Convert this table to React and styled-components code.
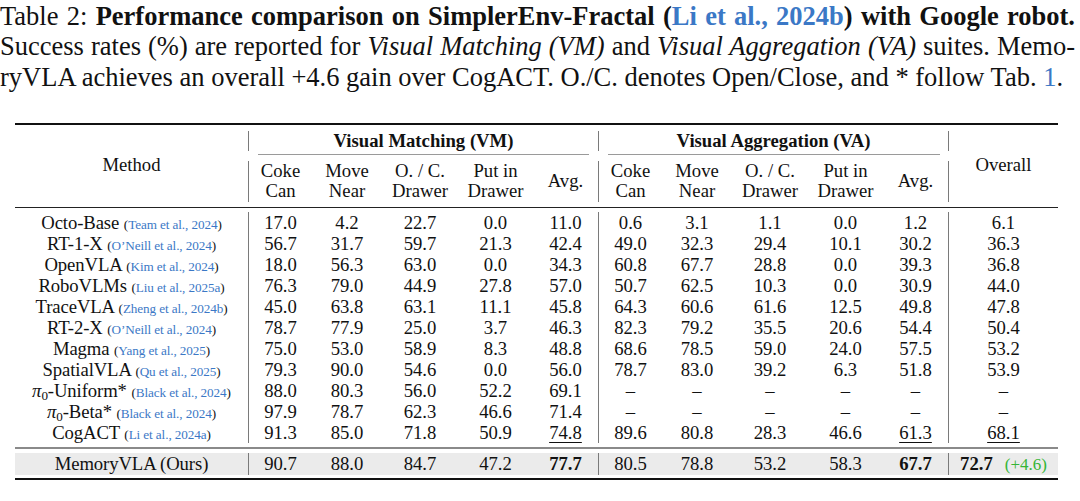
import React from 'react';
import styled, { createGlobalStyle } from 'styled-components';

const BLUE = '#3b78c6';
const GREEN = '#35b535';
const SEP = '#7a7a7a';
const SERIF = `"Liberation Serif", "DejaVu Serif", serif`;

const GlobalStyle = createGlobalStyle`
    body {
        margin: 0;
        background: #ffffff;
        color: #111111;
        font-family: ${SERIF};
    }
`;

const rows = [
    ['Octo-Base', 'Team et al., 2024', '17.0', '4.2', '22.7', '0.0', '11.0', '0.6', '3.1', '1.1', '0.0', '1.2', '6.1'],
    ['RT-1-X', 'O’Neill et al., 2024', '56.7', '31.7', '59.7', '21.3', '42.4', '49.0', '32.3', '29.4', '10.1', '30.2', '36.3'],
    ['OpenVLA', 'Kim et al., 2024', '18.0', '56.3', '63.0', '0.0', '34.3', '60.8', '67.7', '28.8', '0.0', '39.3', '36.8'],
    ['RoboVLMs', 'Liu et al., 2025a', '76.3', '79.0', '44.9', '27.8', '57.0', '50.7', '62.5', '10.3', '0.0', '30.9', '44.0'],
    ['TraceVLA', 'Zheng et al., 2024b', '45.0', '63.8', '63.1', '11.1', '45.8', '64.3', '60.6', '61.6', '12.5', '49.8', '47.8'],
    ['RT-2-X', 'O’Neill et al., 2024', '78.7', '77.9', '25.0', '3.7', '46.3', '82.3', '79.2', '35.5', '20.6', '54.4', '50.4'],
    ['Magma', 'Yang et al., 2025', '75.0', '53.0', '58.9', '8.3', '48.8', '68.6', '78.5', '59.0', '24.0', '57.5', '53.2'],
    ['SpatialVLA', 'Qu et al., 2025', '79.3', '90.0', '54.6', '0.0', '56.0', '78.7', '83.0', '39.2', '6.3', '51.8', '53.9'],
    ['pi:-Uniform*', 'Black et al., 2024', '88.0', '80.3', '56.0', '52.2', '69.1', '–', '–', '–', '–', '–', '–'],
    ['pi:-Beta*', 'Black et al., 2024', '97.9', '78.7', '62.3', '46.6', '71.4', '–', '–', '–', '–', '–', '–'],
    ['CogACT', 'Li et al., 2024a', '91.3', '85.0', '71.8', '50.9', '_74.8', '89.6', '80.8', '28.3', '46.6', '_61.3', '_68.1'],
];

const ours = ['90.7', '88.0', '84.7', '47.2', '*77.7', '80.5', '78.8', '53.2', '58.3', '*67.7'];

const colWidths = [233, 64, 70, 76, 75, 65, 64, 70, 76, 75, 66, 109];

const subHeads = [
    ['Coke', 'Can'],
    ['Move', 'Near'],
    ['O. / C.', 'Drawer'],
    ['Put in', 'Drawer'],
    ['Avg.'],
];

function Value({ v }) {
    if (v.startsWith('_')) return <Under>{v.slice(1)}</Under>;
    if (v.startsWith('*')) return <b>{v.slice(1)}</b>;
    return v;
}

function MethodName({ name }) {
    if (name.startsWith('pi:')) {
        return (
            <>
                <i>π</i>
                <Sub>0</Sub>
                {name.slice(3)}
            </>
        );
    }
    return name;
}

function Cite({ text }) {
    return (
        <CiteText>
            (<CiteLink>{text}</CiteLink>)
        </CiteText>
    );
}

function RuleRow({ $top, $weight, $color, $after }) {
    return (
        <tr>
            <RuleCell colSpan={12}>
                <Line $top={$top} $weight={$weight} $color={$color} $after={$after} />
            </RuleCell>
        </tr>
    );
}

function sepFor(i) {
    // i: 0..9 index across the ten score columns
    return { $left: i === 0 || i === 5, $right: i === 9 };
}

function App() {
    return (
        <>
            <GlobalStyle />
            <Page>
                <Caption>
                    <CaptionLine $full $squeeze>
                        Table 2: <b>Performance comparison on SimplerEnv-Fractal (<CapLink>Li et al., 2024b</CapLink>) with Google robot.</b>
                    </CaptionLine>
                    <CaptionLine $full $squeeze>
                        Success rates (%) are reported for <i>Visual Matching (VM)</i> and <i>Visual Aggregation (VA)</i> suites. Memo-
                    </CaptionLine>
                    <CaptionLine>
                        ryVLA achieves an overall +4.6 gain over CogACT. O./C. denotes Open/Close, and * follow Tab. <CapLink>1</CapLink>.
                    </CaptionLine>
                </Caption>

                <Table>
                    <colgroup>
                        {colWidths.map((w, i) => (
                            <Col key={i} $w={w} />
                        ))}
                    </colgroup>
                    <tbody>
                        <RuleRow $top={0} $weight={2} $color="#111" $after={6} />
                        <tr>
                            <HeadCell rowSpan={3}>Method</HeadCell>
                            <GroupCell colSpan={5} $left>Visual Matching (VM)</GroupCell>
                            <GroupCell colSpan={5} $left $right>Visual Aggregation (VA)</GroupCell>
                            <HeadCell rowSpan={3}>Overall</HeadCell>
                        </tr>
                        <tr>
                            <RuleCell colSpan={5}>
                                <CMid />
                            </RuleCell>
                            <RuleCell colSpan={5}>
                                <CMid />
                            </RuleCell>
                        </tr>
                        <tr>
                            {[...subHeads, ...subHeads].map((lines, i) => (
                                <SubHead key={i} {...sepFor(i)}>
                                    {lines.map((l, j) => (
                                        <div key={j}>{l}</div>
                                    ))}
                                </SubHead>
                            ))}
                        </tr>
                        <RuleRow $top={5} $weight={1} $color="#222" $after={4} />
                        {rows.map((r) => (
                            <DataRow key={r[0]}>
                                <MethodCell>
                                    <MethodName name={r[0]} /> <Cite text={r[1]} />
                                </MethodCell>
                                {r.slice(2, 12).map((v, i) => (
                                    <Cell key={i} {...sepFor(i)}>
                                        <Value v={v} />
                                    </Cell>
                                ))}
                                <Cell>
                                    <Value v={r[12]} />
                                </Cell>
                            </DataRow>
                        ))}
                        <RuleRow $top={4} $weight={2} $color="#8a8a8a" $after={4} />
                        <OursRow>
                            <MethodCell>MemoryVLA (Ours)</MethodCell>
                            {ours.map((v, i) => (
                                <Cell key={i} {...sepFor(i)}>
                                    <Value v={v} />
                                </Cell>
                            ))}
                            <Cell>
                                <b>72.7</b>
                                <Gain>(+4.6)</Gain>
                            </Cell>
                        </OursRow>
                        <RuleRow $top={3} $weight={2} $color="#111" $after={0} />
                    </tbody>
                </Table>
            </Page>
        </>
    );
}

const Page = styled.div`
    padding-top: 1px;
    font-family: ${SERIF};
`;

const Caption = styled.div`
    width: 1075px;
    font-family: ${SERIF};
    font-size: 26.5px;
    line-height: 30.4px;
`;

const CaptionLine = styled.div`
    text-align: justify;
    text-align-last: ${(p) => (p.$full ? 'justify' : 'left')};
    word-spacing: ${(p) => (p.$squeeze ? '-2px' : '0')};
    white-space: nowrap;
`;

const CapLink = styled.span`
    color: ${BLUE};
`;

const Table = styled.table`
    margin: 31px 0 0 15px;
    width: 1043px;
    table-layout: fixed;
    border-collapse: separate;
    border-spacing: 0;
    font-family: ${SERIF};
    font-size: 18.7px;
    line-height: 20px;
    color: #111111;
`;

const Col = styled.col`
    width: ${(p) => p.$w}px;
`;

const RuleCell = styled.td`
    padding: 0;
    vertical-align: top;
    line-height: 0;
`;

const Line = styled.div`
    margin-top: ${(p) => p.$top}px;
    border-top: ${(p) => p.$weight}px solid ${(p) => p.$color};
    height: ${(p) => p.$after}px;
`;

const CMid = styled.div`
    margin: 3px 9px 0 10px;
    border-top: 1px solid #9a9a9a;
    height: 6px;
`;

const Cell = styled.td`
    padding: 0;
    height: 21px;
    text-align: center;
    vertical-align: middle;
    white-space: nowrap;
    border-left: ${(p) => (p.$left ? `1px solid ${SEP}` : 'none')};
    border-right: ${(p) => (p.$right ? `1px solid ${SEP}` : 'none')};
`;

const HeadCell = styled(Cell)`
    padding-bottom: 3px;
`;

const GroupCell = styled(Cell)`
    height: 20px;
    font-weight: bold;
`;

const SubHead = styled(Cell)`
    height: 39px;
    line-height: 19.5px;
    padding-bottom: 2px;
`;

const DataRow = styled.tr`
    height: 21px;
`;

const MethodCell = styled(Cell)`
    letter-spacing: -0.1px;
`;

const OursRow = styled.tr`
    background: #ebebeb;

    td {
        height: 22px;
    }
`;

const CiteText = styled.span`
    font-size: 13.2px;
    line-height: 1;
`;

const CiteLink = styled.span`
    color: ${BLUE};
`;

const Sub = styled.sub`
    font-size: 0.7em;
    line-height: 0;
    vertical-align: -0.22em;
`;

const Under = styled.span`
    text-decoration: underline;
    text-decoration-thickness: 1px;
    text-underline-offset: 3px;
`;

const Gain = styled.span`
    margin-left: 12px;
    font-size: 17px;
    line-height: 1;
    color: ${GREEN};
`;

export default App;
